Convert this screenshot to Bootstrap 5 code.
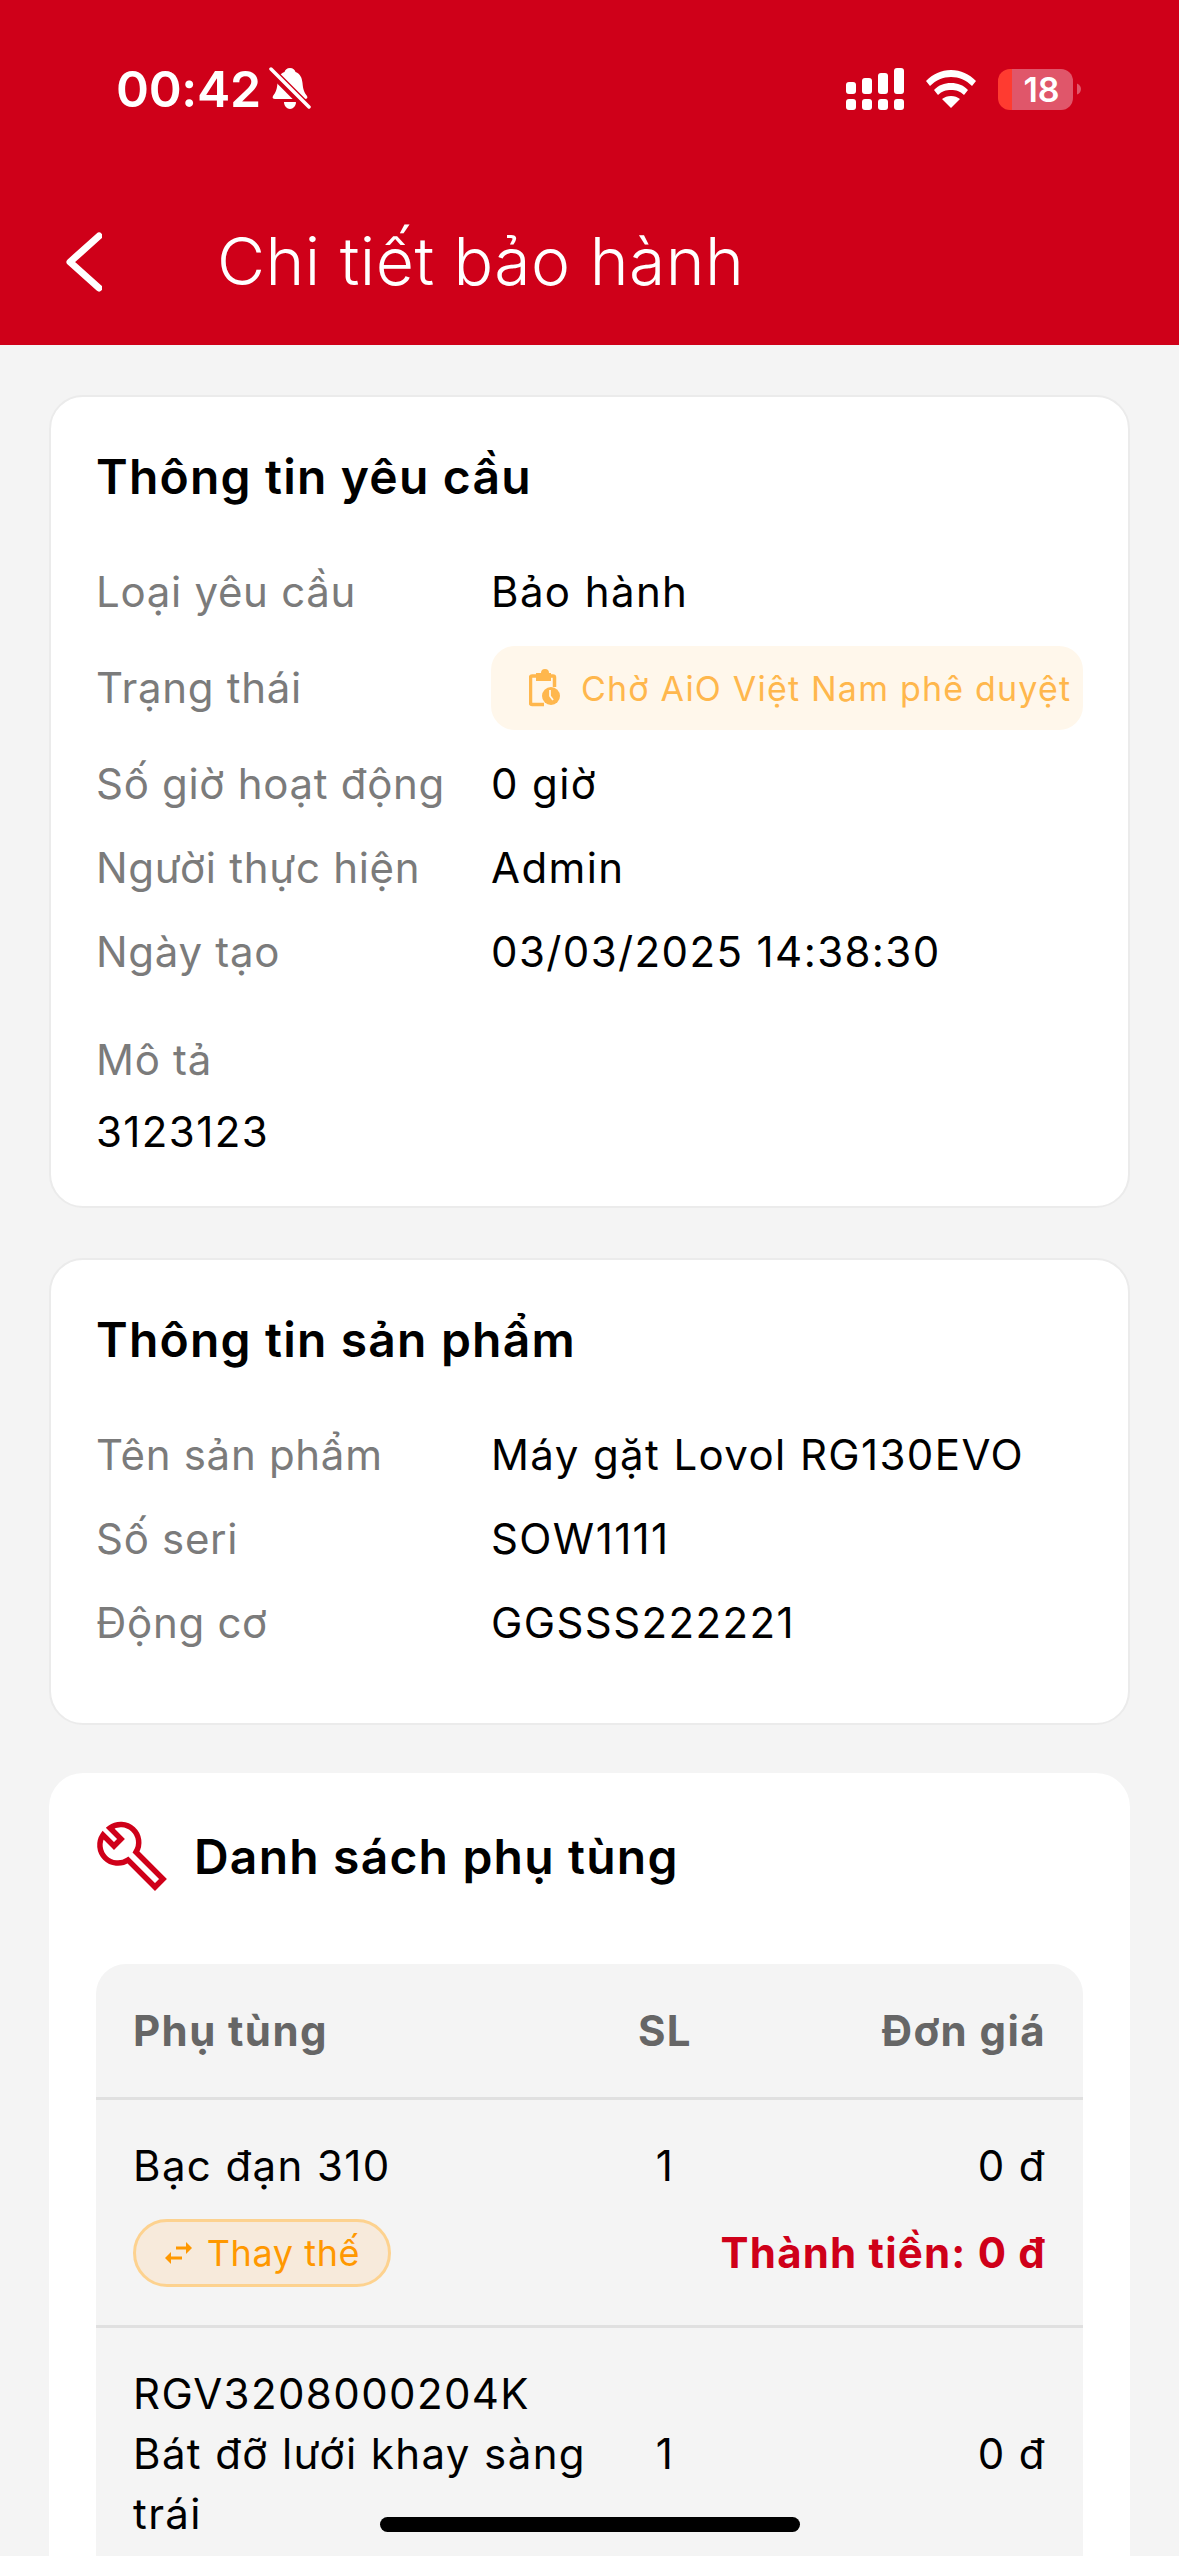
<!DOCTYPE html>
<html lang="vi">

<head>
    <meta charset="UTF-8">
    <meta name="viewport" content="width=device-width, initial-scale=1.0">
    <title>Chi tiết bảo hành</title>
    <link rel="stylesheet" href="https://cdn.jsdelivr.net/npm/bootstrap@5.3.2/dist/css/bootstrap.min.css">
    <style>
        body {
            font-family: Inter, "Liberation Sans", sans-serif;
            background-color: #f4f4f4;
            color: #000;
        }

        .screen {
            position: relative;
            height: 2556px;
            overflow: hidden;
        }

        .app-header {
            background-color: #cf0019;
            color: #fff;
            height: 345px;
            padding-top: 53px;
        }

        .status-line {
            height: 72px;
            padding: 0 98px 0 116px;
        }

        .clock {
            font-size: 50px;
            font-weight: 600;
            line-height: 1;
            letter-spacing: -.3px;
        }

        .status-icons {
            gap: 22px;
        }

        .batt {
            width: 75px;
            height: 41px;
            border-radius: 12px;
            background: linear-gradient(90deg, #ff3b30 19%, #e0566a 19%);
            font-size: 34px;
            font-weight: 600;
            line-height: 41px;
            text-align: center;
            padding-left: 12px;
        }

        .title-line {
            height: 120px;
            margin-top: 77px;
            padding-left: 66px;
        }

        .title-line h1 {
            font-size: 66px;
            font-weight: 300;
            letter-spacing: .45px;
            margin: 0 0 0 115px;
        }

        .info-card {
            border: 2px solid #ebebeb;
            border-radius: 34px;
            margin: 50px 49px 0;
            padding: 0 45px;
        }

        .card-head {
            font-size: 48px;
            font-weight: 600;
            letter-spacing: 1.2px;
            line-height: 56px;
            padding-top: 52px;
            margin-bottom: 45px;
        }

        .info-line {
            min-height: 84px;
        }

        .pill-line {
            min-height: 108px;
        }

        .info-label {
            width: 395px;
            color: #7b7b7b;
            font-size: 42px;
            line-height: 60px;
            letter-spacing: .7px;
            flex-shrink: 0;
        }

        .info-value {
            font-size: 42px;
            line-height: 60px;
            letter-spacing: 1.4px;
        }

        .desc-label {
            margin-top: 36px;
        }

        .desc-value {
            margin-top: 12px;
            padding-bottom: 44px;
        }

        .status-pill {
            background-color: #fff7eb;
            color: #ffb74d;
            border-radius: 24px;
            width: 592px;
            height: 84px;
            font-size: 34px;
            letter-spacing: 1.2px;
            gap: 20px;
            padding-left: 38px;
            white-space: nowrap;
        }

        .sheet-end {
            margin-bottom: 58px;
        }

        .parts-card {
            border-radius: 34px;
            margin: 48px 49px 0;
            padding: 0 47px;
        }

        .parts-title {
            padding-top: 48px;
            margin-bottom: 71px;
            gap: 26px;
        }

        .parts-table {
            background-color: #f4f4f4;
            border-radius: 30px;
            padding-bottom: 120px;
        }

        .parts-head {
            color: #666;
            font-size: 42px;
            font-weight: 700;
            letter-spacing: 1.4px;
            height: 136px;
            border-bottom: 3px solid #e0e0e0;
            padding: 0 37px;
        }

        .parts-row {
            font-size: 42px;
            line-height: 60px;
            letter-spacing: 1.4px;
            padding: 36px 37px 38px;
            border-bottom: 3px solid #e0e0e0;
        }

        .col-name {
            width: 471px;
        }

        .col-qty {
            width: 122px;
        }

        .col-price {
            flex: 1;
        }

        .swap-tag {
            background-color: #f7eadb;
            border: 3px solid #fdd28f;
            color: #ff9800;
            border-radius: 40px;
            height: 68px;
            width: 258px;
            font-size: 36px;
            letter-spacing: .6px;
            gap: 14px;
            margin-top: 23px;
        }

        .line-total {
            color: #cf0019;
            font-weight: 700;
            letter-spacing: 1.2px;
            margin-top: 23px;
        }

        .home-bar {
            position: absolute;
            left: 380px;
            top: 2517px;
            width: 420px;
            height: 15px;
            background: #000;
            border-radius: 8px;
        }
    </style>
</head>

<body>
    <div class="screen">
        <!-- Header -->
        <header class="app-header">
            <div class="status-line d-flex align-items-center justify-content-between">
                <div class="d-flex align-items-center gap-2">
                    <span class="clock">00:42</span>
                    <svg width="42" height="44" viewBox="0 0 42 44" fill="#fff">
                        <path d="M21 1c3 0 5 2 5.500 4 5 2 6.500 6 7 11 .5 6 1.500 9 4.500 13 1 2 0 3-2 3H6c-2 0-3-1-2-3 3-4 4-7 4.500-13 .5-5 2-9 7-11C16 3 18 1 21 1z"/>
                        <path d="M15 35h12c0 4-3 7-6 7s-6-3-6-7z"/>
                        <path d="M2 4l36 36" stroke="#cf0019" stroke-width="9"/>
                        <path d="M2 2l38 38" stroke="#fff" stroke-width="3.500" stroke-linecap="round"/>
                    </svg>
                </div>
                <div class="status-icons d-flex align-items-center">
                    <svg width="58" height="42" viewBox="0 0 58 42" fill="#fff">
                        <rect x="0" y="14" width="10" height="12" rx="3"/><rect x="16" y="10" width="10" height="16" rx="3"/>
                        <rect x="32" y="5" width="10" height="21" rx="3"/><rect x="48" y="0" width="10" height="26" rx="3"/>
                        <rect x="0" y="31" width="10" height="11" rx="3"/><rect x="16" y="31" width="10" height="11" rx="3"/>
                        <rect x="32" y="31" width="10" height="11" rx="3"/><rect x="48" y="31" width="10" height="11" rx="3"/>
                    </svg>
                    <svg width="50" height="38" viewBox="0 0 50 38" fill="#fff">
                        <path d="M25 0C15 0 7 4 0 11l4 5c6-6 13-9 21-9s15 3 21 9l4-5C43 4 35 0 25 0z"/>
                        <path d="M25 13c-7 0-12 2-17 7l4 5c4-4 8-5 13-5s9 1 13 5l4-5c-5-5-10-7-17-7z"/>
                        <path d="M25 26c-4 0-6 1-9 3l9 9 9-9c-3-2-5-3-9-3z"/>
                    </svg>
                    <div class="d-flex align-items-center gap-1">
                        <div class="batt">18</div>
                        <svg width="4" height="14" viewBox="0 0 5 14"><path d="M0 0c3 1 5 4 5 7s-2 6-5 7z" fill="#e0566a"/></svg>
                    </div>
                </div>
            </div>
            <div class="title-line d-flex align-items-center">
                <svg width="36" height="60" viewBox="0 0 36 60" fill="none" stroke="#fff" stroke-width="7" stroke-linecap="round" stroke-linejoin="round">
                    <path d="M33 4L4 30l29 26" />
                </svg>
                <h1>Chi tiết bảo hành</h1>
            </div>
        </header>

        <main class="d-flex flex-column">
            <section class="info-card card">
                <h2 class="card-head">Thông tin yêu cầu</h2>
                <div class="info-line d-flex align-items-center"><div class="info-label">Loại yêu cầu</div><div class="info-value">Bảo hành</div></div>
                <div class="pill-line d-flex align-items-center">
                    <div class="info-label">Trạng thái</div>
                    <div class="status-pill d-flex align-items-center">
                        <svg width="32" height="38" viewBox="9 7 32 38" fill="none" stroke="#ffb74d" stroke-width="3.500">
                            <path d="M17 14h-5a1.500 1.500 0 0 0-1.500 1.500V41a1.500 1.500 0 0 0 1.500 1.500h12M28 14h5a1.500 1.500 0 0 1 1.500 1.500V25" />
                            <path d="M16 11h5a4 4 0 0 1 8 0h2v8H16z" fill="#ffb74d" stroke="none"/>
                            <circle cx="31" cy="34" r="9" fill="#ffb74d" stroke="none"/>
                            <path d="M30 28v6l3 4" stroke="#fff7eb" stroke-width="1.800"/>
                        </svg>
                        <span>Chờ AiO Việt Nam phê duyệt</span>
                    </div>
                </div>
                <div class="info-line d-flex align-items-center"><div class="info-label">Số giờ hoạt động</div><div class="info-value">0 giờ</div></div>
                <div class="info-line d-flex align-items-center"><div class="info-label">Người thực hiện</div><div class="info-value">Admin</div></div>
                <div class="info-line d-flex align-items-center"><div class="info-label">Ngày tạo</div><div class="info-value">03/03/2025 14:38:30</div></div>
                <div class="info-label desc-label">Mô tả</div>
                <div class="info-value desc-value">3123123</div>
            </section>

            <section class="info-card card">
                <h2 class="card-head">Thông tin sản phẩm</h2>
                <div class="info-line d-flex align-items-center"><div class="info-label">Tên sản phẩm</div><div class="info-value">Máy gặt Lovol RG130EVO</div></div>
                <div class="info-line d-flex align-items-center"><div class="info-label">Số seri</div><div class="info-value">SOW1111</div></div>
                <div class="info-line sheet-end d-flex align-items-center"><div class="info-label">Động cơ</div><div class="info-value">GGSSS222221</div></div>
            </section>

            <section class="parts-card card border-0">
                <div class="card-head parts-title d-flex align-items-center">
                    <svg width="72" height="72" viewBox="6 6 72 72" fill="none" stroke="#cf0019" stroke-width="5.500" stroke-linejoin="miter">
                        <path d="M20 13L31 24L24 31L13 20A18 18 0 0 0 38 45L65 72L73 64L46 37A18 18 0 0 0 20 13Z"/>
                    </svg>
                    <span>Danh sách phụ tùng</span>
                </div>
                <div class="parts-table">
                    <div class="parts-head d-flex align-items-center">
                        <div class="col-name">Phụ tùng</div>
                        <div class="col-qty text-center">SL</div>
                        <div class="col-price text-end">Đơn giá</div>
                    </div>
                    <div class="parts-row">
                        <div class="d-flex align-items-center">
                            <div class="col-name">Bạc đạn 310</div>
                            <div class="col-qty text-center">1</div>
                            <div class="col-price text-end">0 đ</div>
                        </div>
                        <div class="d-flex align-items-center justify-content-between">
                            <div class="swap-tag d-flex align-items-center justify-content-center">
                                <svg width="29" height="24" viewBox="12 3 29 24" fill="none" stroke="#ff9800" stroke-width="3">
                                    <path d="M24 10H36M19 20H30"/><path d="M34 4l6 6-6 6z" fill="#ff9800" stroke="none"/><path d="M19 14l-6 6 6 6z" fill="#ff9800" stroke="none"/>
                                </svg>
                                <span>Thay thế</span>
                            </div>
                            <div class="line-total">Thành tiền: 0 đ</div>
                        </div>
                    </div>
                    <div class="parts-row d-flex align-items-center border-0">
                        <div class="col-name">RGV3208000204K<br>Bát đỡ lưới khay sàng trái</div>
                        <div class="col-qty text-center">1</div>
                        <div class="col-price text-end">0 đ</div>
                    </div>
                </div>
            </section>
        </main>

        <div class="home-bar"></div>
    </div>
    <script src="https://cdn.jsdelivr.net/npm/bootstrap@5.3.2/dist/js/bootstrap.bundle.min.js"></script>
</body>

</html>
